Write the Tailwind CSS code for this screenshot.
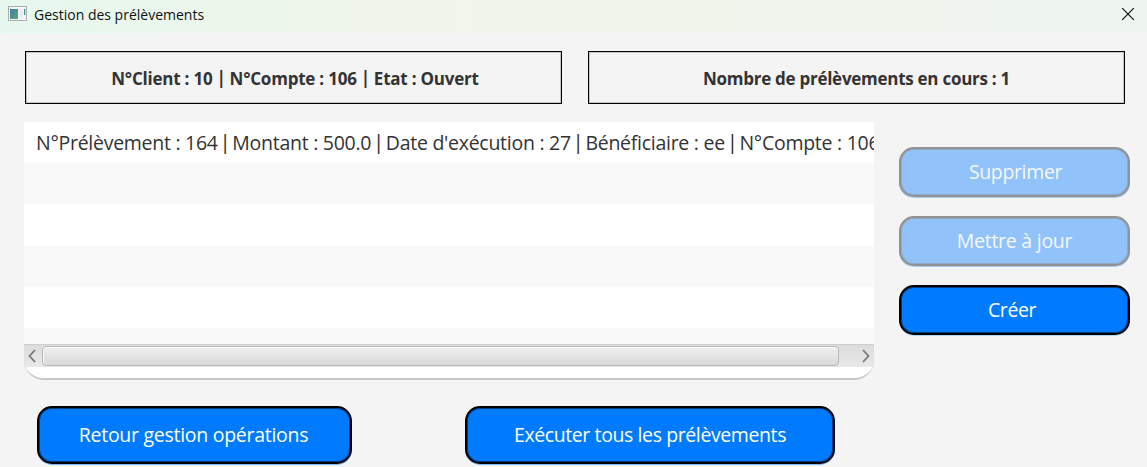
<!DOCTYPE html>
<html lang="fr">
<head>
<meta charset="utf-8">
<title>Gestion des prélèvements</title>
<script src="https://cdn.jsdelivr.net/npm/@tailwindcss/browser@4"></script>
</head>
<body class="flex h-[467px] w-[1147px] flex-col overflow-hidden bg-[#f4f4f4] font-['Open_Sans','Noto_Sans',sans-serif] text-[#333]">
  <header class="flex h-[33px] shrink-0 items-start justify-between bg-linear-to-r from-[#e6f8ee] via-[#f2f5e9] via-40% to-[#eef4f0] pl-2 pr-[12px]">
    <div class="flex items-start">
      <svg class="mt-[6px]" width="19" height="15" viewBox="0 0 19 15">
        <defs><linearGradient id="g" x1="0" y1="0" x2="1" y2="1"><stop offset="0" stop-color="#3f7f9c"/><stop offset="1" stop-color="#58a878"/></linearGradient></defs>
        <rect x=".5" y=".5" width="18" height="14" fill="#f7f7f9" stroke="#a9abb5"/>
        <rect x="2" y="3" width="8" height="10" fill="url(#g)"/>
        <rect x="11" y="3" width="4" height="10" fill="#ebecef"/>
        <rect x="16" y="3" width="1.3" height="6" fill="url(#g)"/>
      </svg>
      <span class="ml-[7px] mt-[5px] text-[14px] leading-[20px] text-[#111]">Gestion des prélèvements</span>
    </div>
    <svg class="mt-[7px]" width="14" height="14" viewBox="0 0 14 14" fill="none" stroke="#111" stroke-width="1.2"><path d="M1.2 1.2 12.8 12.8M12.8 1.2 1.2 12.8"/></svg>
  </header>

  <section class="mt-[18px] flex shrink-0 gap-[26px] pl-[25px] text-[17px] font-bold">
    <div class="flex h-[53px] w-[537px] items-center justify-center whitespace-nowrap border border-black pl-[3px] pt-[3px] tracking-[-0.22px] shadow-[inset_0_0_0_1px_#c4c4c4]"><p>N°Client : 10 <span class="mx-[2px] font-['Lato'] text-[19px] leading-none">|</span> N°Compte : 106 <span class="mx-[2px] font-['Lato'] text-[19px] leading-none">|</span> Etat : Ouvert</p></div>
    <div class="flex h-[53px] w-[537px] items-center justify-center whitespace-nowrap border border-black pt-[3px] tracking-[-0.27px] shadow-[inset_0_0_0_1px_#c4c4c4]"><p>Nombre de prélèvements en cours : 1</p></div>
  </section>

  <main class="mt-[18px] flex shrink-0 pl-[24px] text-[19.5px]">
    <div class="flex h-[258px] w-[850px] flex-col overflow-hidden rounded-b-[20px] border-b-2 border-[#c8c8c8] bg-[#c8c8c8]">
      <div class="h-[41px] shrink-0 overflow-hidden whitespace-nowrap bg-white pl-[12px] leading-[42px] tracking-[-0.27px]">N°Prélèvement : 164 <span class="font-['Lato'] text-[21px] leading-none">|</span> Montant : 500.0 <span class="font-['Lato'] text-[21px] leading-none">|</span> Date d'exécution : 27 <span class="font-['Lato'] text-[21px] leading-none">|</span> Bénéficiaire : ee <span class="font-['Lato'] text-[21px] leading-none">|</span> N°Compte : 106</div>
      <div class="h-[41px] shrink-0 bg-[#f9f9f9]"></div>
      <div class="h-[42px] shrink-0 bg-white"></div>
      <div class="h-[41px] shrink-0 bg-[#f9f9f9]"></div>
      <div class="h-[41px] shrink-0 bg-white"></div>
      <div class="h-[16px] shrink-0 bg-[#f9f9f9]"></div>
      <div class="flex h-[23px] shrink-0 items-center border-t border-[#cfcfcf] bg-linear-to-b from-[#dcdcdc] to-[#e9e9e9] pl-[4px] pr-[4px]">
        <svg width="8" height="14" viewBox="0 0 8 14" fill="none" stroke="#777" stroke-width="1.8"><path d="M7 1 1.5 7 7 13"/></svg>
        <div class="ml-[6px] h-[20px] w-[797px] rounded-[4px] border-[1.5px] border-[#b8b8b8] bg-linear-to-b from-[#efefef] to-[#d9d9d9] shadow-[inset_0_1px_0_#fff,inset_1px_0_0_#f5f5f5]"></div>
        <svg class="ml-auto" width="8" height="14" viewBox="0 0 8 14" fill="none" stroke="#777" stroke-width="1.8"><path d="M1 1 6.5 7 1 13"/></svg>
      </div>
      <div class="flex-1 rounded-b-[18px] border-x border-[#c8c8c8] bg-white"></div>
    </div>

    <div class="ml-[25px] mt-[25px] flex w-[231px] flex-col gap-[19px] text-white">
      <button class="h-[50px] rounded-[15px] border-2 border-[#929292] bg-[#91c2f9] pl-[2px] tracking-[-0.35px] text-[#f4f8fd] shadow-[0_1px_0_#a5cdf7,inset_0_0_0_1px_#92a9c4]">Supprimer</button>
      <button class="h-[50px] rounded-[15px] border-2 border-[#929292] bg-[#91c2f9] tracking-[-0.25px] text-[#f4f8fd] shadow-[0_1px_0_#a5cdf7,inset_0_0_0_1px_#92a9c4]">Mettre à jour</button>
      <button class="h-[50px] rounded-[15px] border-2 border-black bg-[#007bff] pr-[5px] tracking-[-0.4px] shadow-[0_1px_0_#b3d5fa,inset_0_0_0_1px_#003e80]">Créer</button>
    </div>
  </main>

  <footer class="mt-[26px] flex shrink-0 gap-[113px] pl-[37px] text-[19.5px] text-white">
    <button class="h-[58px] w-[315px] rounded-[15px] border-2 border-black bg-[#007bff] pr-[2px] tracking-[-0.28px] shadow-[0_1px_0_#7db9fb,inset_0_0_0_1px_#003e80]">Retour gestion opérations</button>
    <button class="h-[58px] w-[370px] rounded-[15px] border-2 border-black bg-[#007bff] tracking-[-0.4px] shadow-[0_1px_0_#7db9fb,inset_0_0_0_1px_#003e80]">Exécuter tous les prélèvements</button>
  </footer>
</body>
</html>
